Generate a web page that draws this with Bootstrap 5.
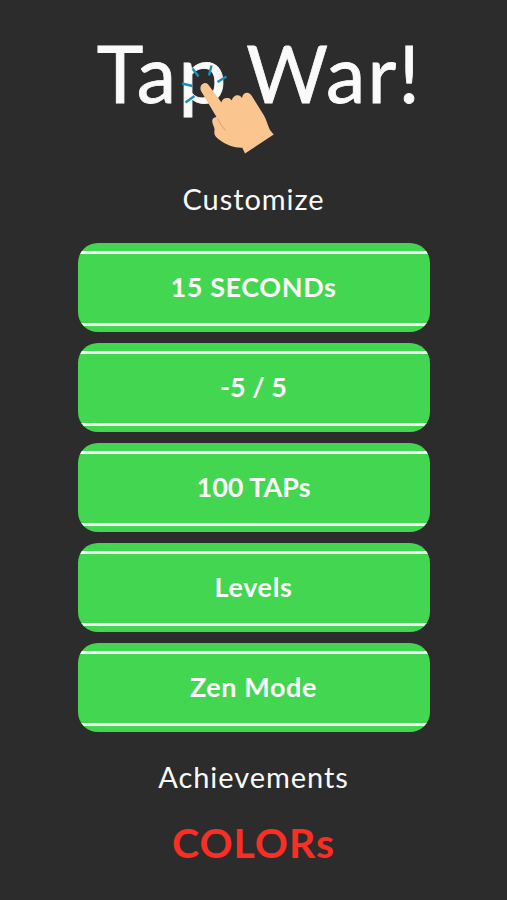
<!DOCTYPE html>
<html lang="en">
<head>
<meta charset="utf-8">
<meta name="viewport" content="width=device-width, initial-scale=1">
<title>Tap War!</title>
<link href="https://cdn.jsdelivr.net/npm/bootstrap@5.3.0/dist/css/bootstrap.min.css" rel="stylesheet">
<style>
body{background:#2c2c2c;color:#fafafa;font-family:Lato,"Open Sans",sans-serif}
.screen{height:900px;overflow:hidden}
.game-title{height:155px;padding:0 0 8px 12px;font-size:79px;line-height:1.2;letter-spacing:2.3px;-webkit-text-stroke:.8px #fafafa}
.wide-p{transform:scaleX(1.1);transform-origin:left}
.tap-hand{position:absolute;left:180px;top:60px}
.menu-link{color:#fafafa;font-size:29px;line-height:1.2;letter-spacing:.95px;text-decoration:none}
.customize{height:88px}
.achievements{height:90px}
.colors{height:42px;color:#f92f25;font-size:41px;font-weight:700}
.modes{width:352px;gap:11px}
.mode-btn{--bs-btn-color:#fafafa;--bs-btn-hover-color:#fff;--bs-btn-bg:#43d751;--bs-btn-hover-bg:#3bc948;height:89px;border-radius:20px;font-size:27px;font-weight:700;line-height:1.2;letter-spacing:.6px;overflow:hidden;padding:7.5px 0}
.mode-btn.numeric{letter-spacing:0}
.mode-btn span{height:75px;padding-bottom:2px;border-top:3px solid #f2fff2;border-bottom:3px solid #f2fff2}
</style>
</head>
<body>
<main class="screen d-flex flex-column align-items-center">
<h1 class="game-title m-0 fw-normal d-flex align-items-center text-nowrap"><span>Ta<span class="wide-p d-inline-block">p</span> War!</span></h1>
<svg class="tap-hand" width="96" height="96" viewBox="180 60 96 96" aria-hidden="true">
<g stroke="#1b8fbd" stroke-width="2.400" fill="none"><path d="M192.5 68.5l6 8M211.5 65.500l-2.500 10M226.500 76.500l-9 5.500M182 83.500l10.500 2.500M185.500 102.500l9-6.500"/></g>
<path fill="#fbc58f" d="M201 91C199.500 87.500 201 84 204 83.200C207 82.500 208.500 84.500 210 87L221.500 102.500C222 98.500 225.500 97.500 228.500 98C230.200 98.300 231 99.500 231.800 100.500C232.500 96.500 236 94.500 239 95.500C240.500 96 241.200 97 242 98C242.500 94 245.500 92.200 248.500 93C250.500 93.500 251.500 95.500 252.800 97.500L264 115.500C266.500 120 268 126 270 130L273.700 134.500L245 153.500L242.300 147.700C234.500 148 227 145.500 219 139.500C214.500 136 214 134.500 214.500 130C214.800 127 212.500 125 212.200 121.500C212 119 213.500 117.500 216.500 117Z"/>
<path d="M217.500 118.500Q220.500 125 225.500 130.500" fill="none" stroke="#d79b68" stroke-width=".9"/>
</svg>
<a class="menu-link customize d-flex align-items-center" href="#">Customize</a>
<nav class="modes d-flex flex-column" aria-label="Game modes">
<button class="btn mode-btn border-0 w-100"><span class="d-flex align-items-center justify-content-center">15 SECONDs</span></button>
<button class="btn mode-btn numeric border-0 w-100"><span class="d-flex align-items-center justify-content-center">-5 / 5</span></button>
<button class="btn mode-btn numeric border-0 w-100"><span class="d-flex align-items-center justify-content-center">100 TAPs</span></button>
<button class="btn mode-btn border-0 w-100"><span class="d-flex align-items-center justify-content-center">Levels</span></button>
<button class="btn mode-btn border-0 w-100"><span class="d-flex align-items-center justify-content-center">Zen Mode</span></button>
</nav>
<a class="menu-link achievements d-flex align-items-center" href="#">Achievements</a>
<a class="menu-link colors d-flex align-items-center" href="#">COLORs</a>
</main>
<script src="https://cdn.jsdelivr.net/npm/bootstrap@5.3.0/dist/js/bootstrap.bundle.min.js"></script>
</body>
</html>
